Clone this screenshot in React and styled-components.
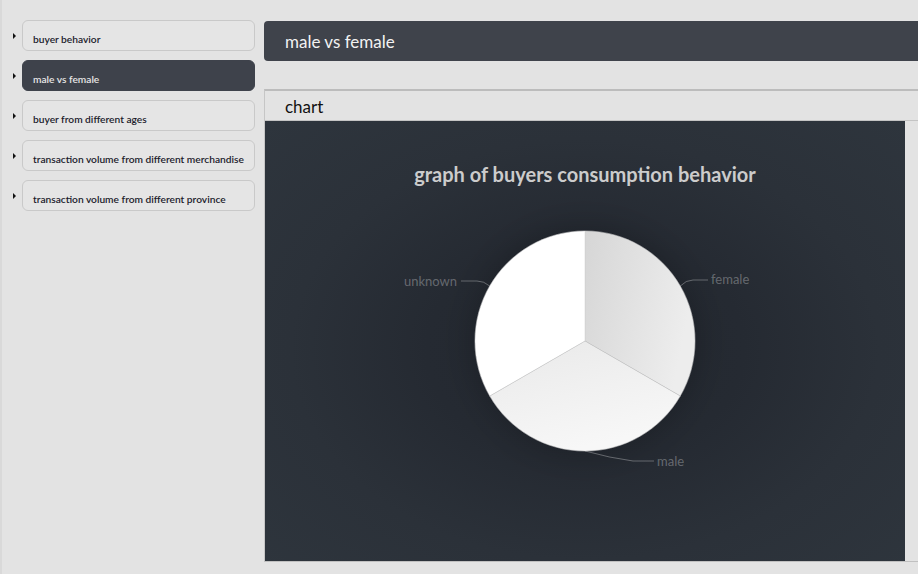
import React from "react";
import styled, { createGlobalStyle } from "styled-components";

const Global = createGlobalStyle`
  html, body { margin: 0; padding: 0; }
  body {
    background: #e3e3e3;
    font-family: Lato, "Open Sans", sans-serif;
    overflow: hidden;
    width: 918px;
    height: 574px;
  }
`;

const Page = styled.div`
  display: flex;
  align-items: flex-start;
  height: 574px;
  border-left: 2px solid #d9d9d9;
  box-sizing: border-box;
`;

const Sidebar = styled.ul`
  list-style: none;
  margin: 0;
  padding: 20px 0 0 11px;
  width: 251px;
  flex: none;
  display: flex;
  flex-direction: column;
  gap: 9px;
`;

const Item = styled.li`
  display: flex;
  align-items: center;
  gap: 6px;
`;

const Marker = styled.span`
  width: 0;
  height: 0;
  border-top: 3px solid transparent;
  border-bottom: 3px solid transparent;
  border-left: 3px solid #111;
  flex: none;
`;

const NavButton = styled.div`
  box-sizing: border-box;
  width: 233px;
  height: 31px;
  border-radius: 6px;
  border: 1px solid ${(p) => (p.$active ? "#3e424b" : "#c9c9c9")};
  background: ${(p) => (p.$active ? "#3e424b" : "#e5e5e5")};
  color: ${(p) => (p.$active ? "#e6e6e6" : "#1b1b2b")};
  font-size: 10.2px;
  font-weight: 600;
  padding: 12px 0 0 10px;
  line-height: 13px;
  white-space: nowrap;
`;

const Main = styled.div`
  flex: none;
  width: 670px;
  padding-top: 21px;
  display: flex;
  flex-direction: column;
`;

const Header = styled.div`
  height: 40px;
  background: #3f434b;
  border-radius: 4px;
  color: #f2f2f2;
  font-size: 17px;
  display: flex;
  align-items: center;
  padding-left: 21px;
`;

const Card = styled.div`
  margin-top: 28px;
  border-top: 2px solid #bcbcbc;
  border-left: 1px solid #c6c6c6;
  border-bottom: 1px solid #c0c0c0;
`;

const CardHeader = styled.div`
  height: 30px;
  display: flex;
  align-items: center;
  padding-left: 20px;
  font-size: 17px;
  color: #111;
`;

const CardBody = styled.div`
  border-top: 1px solid #c4c4c4;
  margin-top: -1px;
  display: flex;
`;

const ChartBox = styled.div`
  width: 640px;
  height: 440px;
  background: radial-gradient(ellipse at 50% 52%, #22272f 0%, #252a32 35%, #2b3139 65%, #2e353d 100%);
`;

const items = [
  "buyer behavior",
  "male vs female",
  "buyer from different ages",
  "transaction volume from different merchandise",
  "transaction volume from different province",
];

function arc(cx, cy, r, a0, a1) {
  const rad = (a) => (a * Math.PI) / 180;
  const x0 = cx + r * Math.cos(rad(a0));
  const y0 = cy + r * Math.sin(rad(a0));
  const x1 = cx + r * Math.cos(rad(a1));
  const y1 = cy + r * Math.sin(rad(a1));
  return `M${cx} ${cy} L${x0} ${y0} A${r} ${r} 0 0 1 ${x1} ${y1} Z`;
}

function PieChart() {
  const cx = 320, cy = 220, r = 110;
  return (
    <svg width="640" height="440" viewBox="0 0 640 440">
      <defs>
        <linearGradient id="gFemale" x1="0" y1="0" x2="1" y2="0.3">
          <stop offset="0" stopColor="#d6d6d6" />
          <stop offset="1" stopColor="#ededed" />
        </linearGradient>
        <linearGradient id="gMale" x1="0" y1="0" x2="0.4" y2="1">
          <stop offset="0" stopColor="#e9e9e9" />
          <stop offset="1" stopColor="#f7f7f7" />
        </linearGradient>
        <filter id="sh" x="-50%" y="-50%" width="200%" height="200%">
          <feDropShadow dx="0" dy="0" stdDeviation="18" floodColor="#000" floodOpacity="0.25" />
        </filter>
      </defs>
      <text
        x={cx}
        y={56}
        textAnchor="middle"
        dominantBaseline="middle"
        fill="#cccccc"
        fontSize="20"
        fontWeight="700"
        fontFamily="Lato, sans-serif"
      >
        graph of buyers consumption behavior
      </text>
      <g filter="url(#sh)">
        <path d={arc(cx, cy, r, -90, 30)} fill="url(#gFemale)" stroke="#c9c9c9" strokeWidth="0.5" />
        <path d={arc(cx, cy, r, 30, 150)} fill="url(#gMale)" stroke="#c9c9c9" strokeWidth="0.5" />
        <path d={arc(cx, cy, r, 150, 270)} fill="#ffffff" stroke="#d0d0d0" strokeWidth="0.5" />
      </g>
      <g fill="none" stroke="rgba(255,255,255,0.3)" strokeWidth="1">
        <path d="M224.7 165 Q219 160 212 160 L196 160" />
        <path d="M415.3 165 Q421 159 428 159 L443 159" />
        <path d="M320 330 Q345 337 368 340 L389 340" />
      </g>
      <g fill="rgba(255,255,255,0.3)" fontSize="13" fontFamily="Lato, sans-serif" dominantBaseline="middle">
        <text x="192" y="162" textAnchor="end">unknown</text>
        <text x="446" y="160">female</text>
        <text x="392" y="342">male</text>
      </g>
    </svg>
  );
}

export default function App() {
  return (
    <>
      <Global />
      <Page>
        <Sidebar>
          {items.map((t, i) => (
            <Item key={t}>
              <Marker />
              <NavButton $active={i === 1}>{t}</NavButton>
            </Item>
          ))}
        </Sidebar>
        <Main>
          <Header>male vs female</Header>
          <Card>
            <CardHeader>chart</CardHeader>
            <CardBody>
              <ChartBox>
                <PieChart />
              </ChartBox>
            </CardBody>
          </Card>
        </Main>
      </Page>
    </>
  );
}
